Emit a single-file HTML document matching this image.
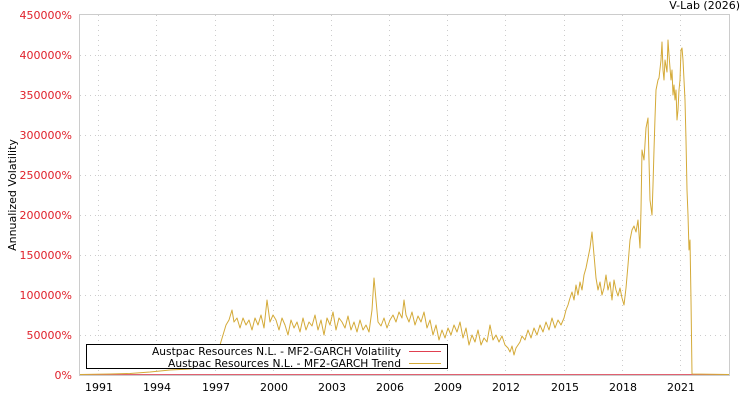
<!DOCTYPE html>
<html><head><meta charset="utf-8"><style>
html,body{margin:0;padding:0;background:#fff;width:750px;height:400px;overflow:hidden}
svg{display:block;font-family:"DejaVu Sans","Liberation Sans",sans-serif}
</style></head><body>
<svg width="750" height="400" viewBox="0 0 750 400">
<rect x="79.5" y="14.5" width="650" height="361" fill="#fff" stroke="#ccc"/>
<g stroke="#ccc" stroke-dasharray="1,4" stroke-width="1">
<line x1="80" x2="729" y1="55.5" y2="55.5"/><line x1="80" x2="729" y1="95.5" y2="95.5"/>
<line x1="80" x2="729" y1="135.5" y2="135.5"/><line x1="80" x2="729" y1="175.5" y2="175.5"/>
<line x1="80" x2="729" y1="215.5" y2="215.5"/><line x1="80" x2="729" y1="255.5" y2="255.5"/>
<line x1="80" x2="729" y1="295.5" y2="295.5"/><line x1="80" x2="729" y1="335.5" y2="335.5"/>
<line y1="15" y2="375" x1="98.5" x2="98.5"/><line y1="15" y2="375" x1="156.5" x2="156.5"/>
<line y1="15" y2="375" x1="215.5" x2="215.5"/><line y1="15" y2="375" x1="273.5" x2="273.5"/>
<line y1="15" y2="375" x1="331.5" x2="331.5"/><line y1="15" y2="375" x1="389.5" x2="389.5"/>
<line y1="15" y2="375" x1="447.5" x2="447.5"/><line y1="15" y2="375" x1="505.5" x2="505.5"/>
<line y1="15" y2="375" x1="564.5" x2="564.5"/><line y1="15" y2="375" x1="622.5" x2="622.5"/>
<line y1="15" y2="375" x1="680.5" x2="680.5"/>
</g>
<g fill="#e0202a" font-size="11" text-anchor="end">
<text x="72" y="19">450000%</text><text x="72" y="59">400000%</text><text x="72" y="99">350000%</text>
<text x="72" y="139">300000%</text><text x="72" y="179">250000%</text><text x="72" y="219">200000%</text>
<text x="72" y="259">150000%</text><text x="72" y="299">100000%</text><text x="72" y="339">50000%</text>
<text x="72" y="379">0%</text>
</g>
<g fill="#000" font-size="11" text-anchor="middle">
<text x="99" y="391">1991</text><text x="157" y="391">1994</text><text x="216" y="391">1997</text>
<text x="274" y="391">2000</text><text x="332" y="391">2003</text><text x="390" y="391">2006</text>
<text x="448" y="391">2009</text><text x="506" y="391">2012</text><text x="565" y="391">2015</text>
<text x="623" y="391">2018</text><text x="681" y="391">2021</text>
</g>
<text x="740" y="9" font-size="11" text-anchor="end">V-Lab (2026)</text>
<text transform="translate(16,195) rotate(-90)" font-size="11" text-anchor="middle">Annualized Volatility</text>
<line x1="80" x2="729" y1="374.5" y2="374.5" stroke="#e06070" stroke-width="1"/>
<polyline fill="none" stroke="#d4aa38" stroke-width="1" stroke-linejoin="round" points="
80,374.5 110,374 130,373.5 150,372 170,370 190,369 205,367 210,364 214,358 217,350 220,345 223,335 226,325 229,320 232,310 234,322 237,318 240,328 243,318 246,325 249,320 252,330 255,318 258,325 261,315 264,328 267,300 270,322 273,315 276,320 279,330 282,318 285,325 288,335 291,320 294,328 297,322 300,332 303,318 306,330 309,322 312,326 315,315 318,330 321,320 324,335 327,318 330,325 333,312 336,330 339,318 342,322 345,328 348,316 351,330 354,322 357,332 360,320 363,330 366,325 369,332 372,310 374,278 376,300 378,322 381,326 384,318 387,328 390,320 393,315 396,322 399,312 402,318 404,300 406,315 409,322 412,312 415,325 418,316 421,322 424,312 427,328 430,320 433,335 436,325 439,340 442,330 445,338 448,328 451,335 454,325 457,332 460,322 463,338 466,328 469,345 472,335 475,342 478,330 481,345 484,338 487,342 490,325 493,340 496,335 499,342 502,336 505,345 508,348 510,352 512,346 514,355 516,348 518,345 520,342 522,336 525,340 528,330 531,338 534,328 537,335 540,325 543,332 546,322 549,330 552,318 555,328 558,320 561,325 564,318 566,310 568,305 570,298 572,292 574,300 576,285 578,295 580,282 582,290 584,275 586,268 588,258 590,248 592,232 594,255 596,278 598,290 600,282 602,295 604,288 606,275 608,290 610,282 612,300 614,280 616,290 618,296 620,288 622,298 624,305 626,288 628,265 630,240 632,230 634,226 636,232 638,220 640,248 641,210 642,150 644,160 646,128 648,118 649,160 650,200 652,215 653,185 654,150 655,118 656,90 658,80 659,78 661,60 662,42 663,70 664,80 665,60 667,72 668,40 669,55 670,68 671,80 672,70 673,95 674,85 675,100 676,90 677,120 678,110 679,90 680,80 681,50 682,48 683,60 684,80 685,100 686,140 687,190 688,215 689,250 690,240 691,300 692,374 729,374.5"/>
<rect x="86.5" y="344.5" width="361" height="24" fill="#fff" stroke="#000"/>
<g font-size="11">
<text x="152" y="355" textLength="249" lengthAdjust="spacingAndGlyphs">Austpac Resources N.L. - MF2-GARCH Volatility</text>
<text x="168" y="367" textLength="233" lengthAdjust="spacingAndGlyphs">Austpac Resources N.L. - MF2-GARCH Trend</text>
</g>
<line x1="409" x2="441" y1="351.5" y2="351.5" stroke="#e04050"/>
<line x1="409" x2="441" y1="363.5" y2="363.5" stroke="#d4aa38"/>
</svg>
</body></html>
